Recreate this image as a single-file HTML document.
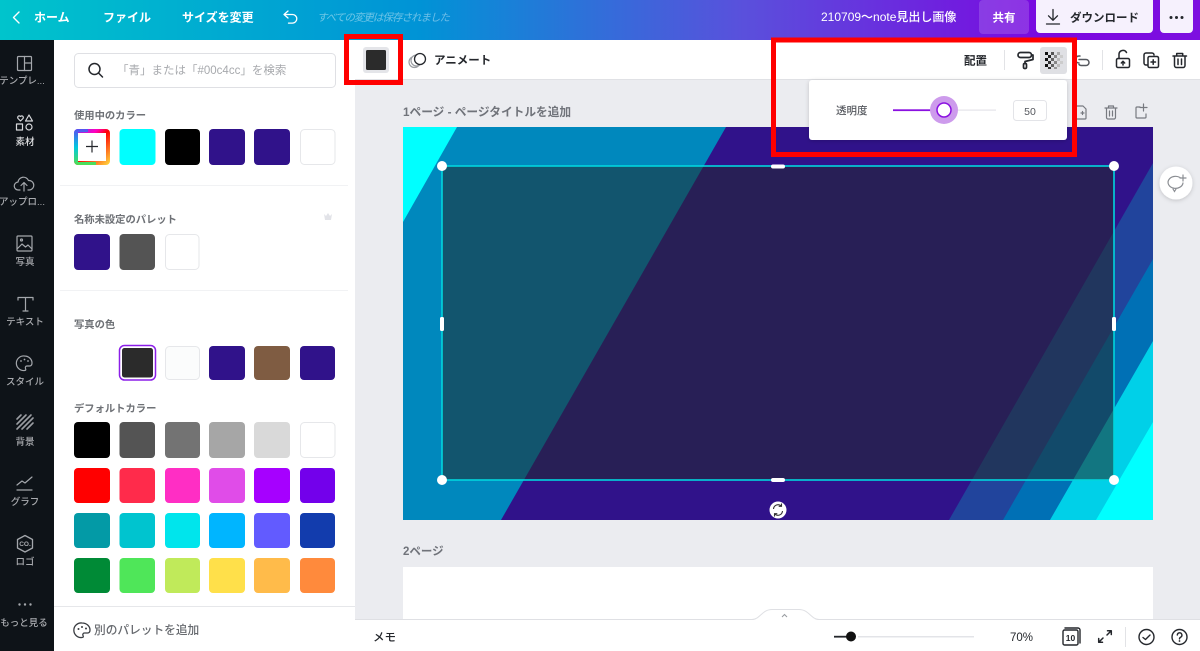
<!DOCTYPE html>
<html lang="ja">
<head>
<meta charset="utf-8">
<title>Canva</title>
<style>
html,body{margin:0;padding:0;width:1200px;height:651px;overflow:hidden;background:#ebecf0}
svg{display:block;position:absolute;left:0;top:0;filter:blur(.35px)}
text{font-family:"Liberation Sans","Noto Sans CJK JP",sans-serif}
.w{fill:#fff;font-size:12px;font-weight:700}
.s{fill:#a9abaf;font-size:9.5px;text-anchor:middle;font-weight:500}
.h{fill:#6e7176;font-size:10.300px;font-weight:700}
.i{fill:none;stroke:#24272c;stroke-width:1.5;stroke-linecap:round;stroke-linejoin:round}
.g{fill:none;stroke:#a4a7ac;stroke-width:1.2;stroke-linecap:round;stroke-linejoin:round}
.p{fill:none;stroke:#777a80;stroke-width:1.2;stroke-linecap:round;stroke-linejoin:round}
.b{fill:#24272c;font-size:11.5px;font-weight:700}
</style>
</head>
<body>
<svg width="1200" height="651" viewBox="0 0 1200 651" xmlns="http://www.w3.org/2000/svg">
<defs>
<linearGradient id="top" x1="0" x2="1" y1="0" y2="0">
<stop offset="0" stop-color="#00c4cc"/>
<stop offset=".35" stop-color="#0093d6"/>
<stop offset=".62" stop-color="#5a50dc"/>
<stop offset=".88" stop-color="#7b06e0"/>
<stop offset="1" stop-color="#7d10e0"/>
</linearGradient>
<linearGradient id="rb" x1="0" y1="0" x2="1" y2="1">
<stop offset="0" stop-color="#6a3df0"/>
<stop offset=".33" stop-color="#ff00c0"/>
<stop offset=".5" stop-color="#ff0000"/>
<stop offset="1" stop-color="#ffe040"/>
</linearGradient>
<linearGradient id="rb2" x1="0" y1="0" x2="0" y2="1">
<stop offset="0" stop-color="#5a50f0"/>
<stop offset=".5" stop-color="#00c8e0"/>
<stop offset="1" stop-color="#50e050"/>
</linearGradient>
<filter id="sh" x="-30%" y="-30%" width="160%" height="160%"><feDropShadow dx="0" dy="1" stdDeviation="2" flood-color="#000" flood-opacity=".18"/></filter>
</defs>

<!-- workspace -->
<rect x="355" y="40" width="845" height="611" fill="#ebecf0"/>

<!-- canvas page 1 -->
<rect x="403" y="127" width="750" height="393" fill="#30128a"/>
<polygon points="403,127 726,127 501,520 403,520" fill="#0088bd"/>
<polygon points="403,127 457,127 403,222" fill="#00ffff"/>
<polygon points="949,520 1153,163 1153,520" fill="#21449c"/>
<polygon points="1003,520 1153,259 1153,520" fill="#0070b5"/>
<polygon points="1050,520 1153,341 1153,520" fill="#00d0e8"/>
<polygon points="1096,520 1153,422 1153,520" fill="#00ffff"/>
<rect x="442" y="166" width="672" height="314" fill="#222b2b" fill-opacity=".54"/>

<!-- selection -->
<rect x="442" y="166" width="672" height="314" fill="none" stroke="#00d5de" stroke-width="1.6"/>
<g fill="#fff">
<circle cx="442" cy="166" r="5"/><circle cx="1114" cy="166" r="5"/><circle cx="442" cy="480" r="5"/><circle cx="1114" cy="480" r="5"/>
<rect x="771" y="164.500" width="14" height="4" rx="2"/><rect x="771" y="478" width="14" height="4" rx="2"/>
<rect x="440" y="317" width="4" height="14" rx="1.500"/><rect x="1112" y="317" width="4" height="14" rx="1.500"/>
<circle cx="778" cy="510" r="8.500"/>
</g>
<path d="M773.500 509a4.600 4.600 0 0 1 7.800-3M782.500 511a4.600 4.600 0 0 1-7.800 3M781.500 503.500v2.800h-2.800M774.500 516.500v-2.800h2.800" fill="none" stroke="#333" stroke-width="1.100"/>

<!-- page 2 -->
<rect x="403" y="567" width="750" height="60" fill="#fff"/>
<text x="403" y="555" fill="#70737a" font-size="11.500" font-weight="700">2ページ</text>
<text x="403" y="116" fill="#70737a" font-size="11.700" font-weight="700">1ページ - ページタイトルを追加</text>

<!-- page icons -->
<g class="p">
<path d="M1076 106h7l3 3v9a1 1 0 0 1-1 1h-8a1 1 0 0 1-1-1z"/>
<path d="M1081 113h3M1082.500 111.500v3"/>
<path d="M1105 108h12M1108.500 108v-2h5v2M1106.500 108v9.500a1.500 1.500 0 0 0 1.500 1.500h6a1.500 1.500 0 0 0 1.500-1.500V108M1109.500 111v5M1112.500 111v5"/>
<path d="M1140 107h-3a1 1 0 0 0-1 1v9a1 1 0 0 0 1 1h8a1 1 0 0 0 1-1v-3M1143.500 104v7M1140 107.500h7"/>
</g>

<!-- comment button -->
<circle cx="1176" cy="183" r="16.500" fill="#fff" filter="url(#sh)"/>
<path d="M1180 177.500a7.500 6 0 1 0 3 5.500M1173 189l1.500 2.500 1.500-2.500M1183 175v6M1180 178h6" fill="none" stroke="#8b8e93" stroke-width="1.200" stroke-linecap="round"/>

<!-- toolbar -->
<rect x="355" y="40" width="845" height="39" fill="#fff"/>
<rect x="355" y="79" width="845" height="1" fill="#e0e1e5"/>
<rect x="363" y="47" width="26" height="26" rx="3" fill="#e4e5e9"/>
<rect x="366" y="50" width="20" height="20" rx="1.500" fill="#2b2b2b"/>
<g fill="#fff" stroke="#9a9da2" stroke-width="1.200"><circle cx="414.500" cy="62" r="5.500"/><circle cx="416.500" cy="60.500" r="5.500"/></g>
<circle cx="420" cy="59" r="5.500" fill="#fff" stroke="#24272c" stroke-width="1.300"/>
<text x="434" y="64" class="b">アニメート</text>
<text x="964" y="64.500" class="b">配置</text>
<rect x="1004" y="50" width="1" height="20" fill="#e2e3e6"/>
<!-- roller -->
<g class="i" style="stroke-width:1.700">
<rect x="1018" y="52.500" width="13.500" height="5" rx="2.500"/>
<path d="M1031.500 55h1.500v4.500l-8 2v2"/>
<rect x="1023.500" y="63.500" width="3" height="5" rx="1.200"/>
</g>
<!-- checker -->
<rect x="1040" y="47" width="27" height="27" rx="3" fill="#dfe0e4"/>
<g>
<rect x="1045" y="52" width="3" height="3" fill="#111"/><rect x="1051" y="52" width="3" height="3" fill="#555"/><rect x="1057" y="52" width="3" height="3" fill="#aaa"/>
<rect x="1048" y="55" width="3" height="3" fill="#222"/><rect x="1054" y="55" width="3" height="3" fill="#888"/><rect x="1060" y="55" width="3" height="3" fill="#ccc"/>
<rect x="1045" y="58" width="3" height="3" fill="#111"/><rect x="1051" y="58" width="3" height="3" fill="#666"/><rect x="1057" y="58" width="3" height="3" fill="#bbb"/>
<rect x="1048" y="61" width="3" height="3" fill="#333"/><rect x="1054" y="61" width="3" height="3" fill="#888"/><rect x="1060" y="61" width="3" height="3" fill="#ccc"/>
<rect x="1045" y="64" width="3" height="3" fill="#111"/><rect x="1051" y="64" width="3" height="3" fill="#666"/><rect x="1057" y="64" width="3" height="3" fill="#bbb"/>
<rect x="1048" y="67" width="3" height="2" fill="#333"/><rect x="1054" y="67" width="3" height="2" fill="#999"/>
</g>
<g class="i">
<!-- link -->
<path d="M1080 56h-1a3.500 3.500 0 0 0 0 7M1079 59.500h7a3 3 0 0 1 0 6h-5a3 3 0 0 1-2-1" style="stroke:#55585e"/>
<!-- lock -->
<rect x="1116.500" y="58.500" width="13" height="9" rx="1.500"/>
<path d="M1119 58.500v-4.500a4 4 0 0 1 7.500-1.500M1123 65v-3.500M1121.300 63l1.700-1.700 1.700 1.700"/>
<!-- dup -->
<path d="M1147.500 65h-1.500a2 2 0 0 1-2-2v-8a2 2 0 0 1 2-2h6a2 2 0 0 1 2 2"/>
<rect x="1148" y="56.500" width="10.500" height="11" rx="1.500"/>
<path d="M1151 62h4.500M1153.200 59.800v4.500"/>
<!-- trash -->
<path d="M1173 56h13.500M1176.700 56v-2.500h6V56M1174.500 56v9.500a2 2 0 0 0 2 2h6.500a2 2 0 0 0 2-2V56M1178 59v5.500M1181.500 59v5.500"/>
</g>
<rect x="1102" y="50" width="1" height="20" fill="#e2e3e6"/>

<!-- popup -->
<rect x="809" y="80" width="258" height="60" rx="3" fill="#fff" filter="url(#sh)"/>
<text x="836" y="114" fill="#55585e" font-size="10.500" font-weight="500">透明度</text>
<rect x="893" y="109.500" width="103" height="1.200" fill="#e4e3ea"/>
<rect x="893" y="109.300" width="50" height="1.800" fill="#8a10e0"/>
<circle cx="944" cy="110" r="14" fill="#cd9bec"/>
<circle cx="944" cy="110" r="7" fill="#fff" stroke="#8a10e0" stroke-width="1.500"/>
<rect x="1013.500" y="100.500" width="33" height="20" rx="3" fill="#fff" stroke="#e3e4e8"/>
<text x="1030" y="115" fill="#55585e" font-size="10.500" text-anchor="middle">50</text>

<!-- bottom bar -->
<rect x="355" y="620" width="845" height="31" fill="#fff"/>
<rect x="355" y="619" width="845" height="1" fill="#dfe0e4"/>
<path d="M752 620c8 0 10-10 20-10h27c10 0 12 10 20 10z" fill="#fff"/>
<path d="M752 619.500c8 0 10-10 20-10h27c10 0 12 10 20 10" fill="none" stroke="#dfe0e4"/>
<path d="M782 617l2.500-2.500 2.500 2.500" fill="none" stroke="#9a9da2" stroke-width="1.100"/>
<text x="373" y="641" fill="#24272c" font-size="11.500" font-weight="500">メモ</text>
<rect x="834" y="635.800" width="14" height="1.800" fill="#24272c"/>
<circle cx="851" cy="636.500" r="5" fill="#111"/>
<rect x="858" y="636" width="116" height="1.500" fill="#e3e4e8"/>
<text x="1010" y="641" fill="#24272c" font-size="11.500" font-weight="500">70%</text>
<g class="i" style="stroke-width:1.400">
<rect x="1063" y="630" width="15" height="15" rx="1.500"/>
<path d="M1065 628h13a2 2 0 0 1 2 2v13"/>
<path d="M1107 635l4-4M1107.500 630.700h3.800v3.800M1103 638l-4 4M1098.700 638.500v3.800h3.800" style="stroke-width:1.500"/>
<circle cx="1146.500" cy="637" r="7.500"/>
<path d="M1143 637.500l2.500 2 4.500-4.500"/>
<circle cx="1179.500" cy="637" r="7.500"/>
<path d="M1177.300 635a2.300 2.300 0 1 1 3.300 2.200c-.8.400-1.100.9-1.100 1.700"/>
</g>
<text x="1070.500" y="641" fill="#24272c" font-size="8.500" font-weight="700" text-anchor="middle">10</text>
<circle cx="1179.500" cy="641" r=".9" fill="#24272c"/>
<rect x="1125" y="627" width="1" height="20" fill="#e2e3e6"/>

<!-- side panel -->
<rect x="54" y="40" width="301" height="611" fill="#fff"/>
<rect x="74.500" y="53.500" width="261" height="34" rx="4" fill="#fff" stroke="#dfe0e4"/>
<g fill="none" stroke="#24272c" stroke-width="1.500" stroke-linecap="round"><circle cx="94.500" cy="69" r="5.500"/><path d="M98.500 73l4 4"/></g>
<text x="117" y="74" fill="#a7a9ad" font-size="11.500">「青」または「#00c4cc」を検索</text>

<text x="74" y="119" class="h">使用中のカラー</text>
<text x="74" y="223" class="h">名称未設定のパレット</text>
<text x="74" y="328" class="h">写真の色</text>
<text x="74" y="412" class="h">デフォルトカラー</text>
<rect x="60" y="185" width="288" height="1" fill="#f1f2f4"/>
<rect x="60" y="290" width="288" height="1" fill="#f1f2f4"/>
<path d="M324 214l2 2 2-3 2 3 2-2-1 6h-6z" fill="#e2e3e8"/>

<!-- row 1 -->
<rect x="74" y="129" width="36" height="36" rx="4" fill="url(#rb)"/>
<path d="M78 129h-0a4 4 0 0 0-4 4v28a4 4 0 0 0 4 4h18l0-3H78V132h10l0-3z" fill="url(#rb2)"/>
<rect x="78" y="133" width="28" height="28" fill="#fff"/>
<path d="M92 140.500v12M86 146.500h12" stroke="#24272c" stroke-width="1.200"/>
<rect x="119.500" y="129" width="36" height="36" rx="4" fill="#00ffff"/>
<rect x="165" y="129" width="35" height="36" rx="4" fill="#000"/>
<rect x="209" y="129" width="36" height="36" rx="4" fill="#30128a"/>
<rect x="254" y="129" width="36" height="36" rx="4" fill="#30128a"/>
<rect x="300.500" y="129.500" width="34.500" height="35" rx="4" fill="#fff" stroke="#e6e7ea"/>
<!-- row 2 -->
<rect x="74" y="234" width="36" height="36" rx="4" fill="#30128a"/>
<rect x="119.500" y="234" width="35.500" height="36" rx="4" fill="#545454"/>
<rect x="165.500" y="234.500" width="33.500" height="35" rx="4" fill="#fff" stroke="#e6e7ea"/>
<!-- photo row -->
<rect x="119.500" y="345.500" width="36" height="34.500" rx="5" fill="#fff" stroke="#8b1ee8" stroke-width="1.500"/>
<rect x="122" y="348" width="31" height="29.500" rx="2.500" fill="#2b2b2b"/>
<rect x="165.500" y="346.500" width="34" height="33" rx="4" fill="#fbfcfc" stroke="#e6e7ea"/>
<rect x="209" y="346" width="36" height="34" rx="4" fill="#30128a"/>
<rect x="254" y="346" width="36" height="34" rx="4" fill="#7f5c42"/>
<rect x="300" y="346" width="35" height="34" rx="4" fill="#30128a"/>
<!-- default rows -->
<g>
<rect x="74" y="422" width="36" height="36" rx="4" fill="#000"/>
<rect x="119.500" y="422" width="35.500" height="36" rx="4" fill="#545454"/>
<rect x="165" y="422" width="35" height="36" rx="4" fill="#737373"/>
<rect x="209" y="422" width="36" height="36" rx="4" fill="#a6a6a6"/>
<rect x="254" y="422" width="36" height="36" rx="4" fill="#d9d9d9"/>
<rect x="300.500" y="422.500" width="34.500" height="35" rx="4" fill="#fff" stroke="#e6e7ea"/>

<rect x="74" y="468" width="36" height="35" rx="4" fill="#ff0000"/>
<rect x="119.500" y="468" width="35.500" height="35" rx="4" fill="#ff2b4b"/>
<rect x="165" y="468" width="35" height="35" rx="4" fill="#ff2ec4"/>
<rect x="209" y="468" width="36" height="35" rx="4" fill="#e04ce8"/>
<rect x="254" y="468" width="36" height="35" rx="4" fill="#a600ff"/>
<rect x="300" y="468" width="35" height="35" rx="4" fill="#7300eb"/>

<rect x="74" y="513" width="36" height="35" rx="4" fill="#039aa6"/>
<rect x="119.500" y="513" width="35.500" height="35" rx="4" fill="#00c4cf"/>
<rect x="165" y="513" width="35" height="35" rx="4" fill="#00e5ec"/>
<rect x="209" y="513" width="36" height="35" rx="4" fill="#00b5ff"/>
<rect x="254" y="513" width="36" height="35" rx="4" fill="#625bff"/>
<rect x="300" y="513" width="35" height="35" rx="4" fill="#123cad"/>

<rect x="74" y="558" width="36" height="35" rx="4" fill="#008a36"/>
<rect x="119.500" y="558" width="35.500" height="35" rx="4" fill="#4fe659"/>
<rect x="165" y="558" width="35" height="35" rx="4" fill="#c0ea5a"/>
<rect x="209" y="558" width="36" height="35" rx="4" fill="#ffe04a"/>
<rect x="254" y="558" width="36" height="35" rx="4" fill="#ffbb4a"/>
<rect x="300" y="558" width="35" height="35" rx="4" fill="#ff8a3c"/>
</g>
<!-- panel footer -->
<rect x="54" y="606" width="301" height="1" fill="#e6e7ea"/>
<g class="i" style="stroke:#3a3d42;stroke-width:1.300">
<path d="M82 623a7.300 7.300 0 1 0 0 14.500c1.500 0 1.500-1 1-2s0-2.500 1.500-2.500h3c1.500 0 2.500-1 2.500-3 0-4-3.500-7-8-7z"/>
</g>
<g fill="#3a3d42"><circle cx="78.500" cy="629" r="1"/><circle cx="82" cy="627" r="1"/><circle cx="86" cy="628.500" r="1"/></g>
<text x="94" y="634" fill="#66696e" font-size="11.700" font-weight="500">別のパレットを追加</text>

<!-- top bar -->
<rect x="0" y="0" width="1200" height="40" fill="url(#top)"/>
<path d="M19 12l-5.500 5.500L19 23" fill="none" stroke="#fff" stroke-width="1.400" stroke-linecap="round" stroke-linejoin="round"/>
<text x="34" y="21.500" class="w">ホーム</text>
<text x="103" y="21.500" class="w">ファイル</text>
<text x="182" y="21.500" class="w">サイズを変更</text>
<path d="M285.500 14.500h7a4.300 4.300 0 0 1 0 8.600h-4M288 11L284 14.500l4 3.500" fill="none" stroke="#fff" stroke-width="1.300" stroke-linecap="round" stroke-linejoin="round"/>
<text x="317" y="21" fill="#ffffff" fill-opacity=".42" font-size="10.500" font-style="italic" textLength="133" lengthAdjust="spacing">すべての変更は保存されました</text>
<text x="821" y="21" fill="#fff" font-size="12" font-weight="500">210709〜note見出し画像</text>
<rect x="979" y="0" width="50" height="34" rx="4" fill="#fff" fill-opacity=".16"/>
<text x="1004" y="21.500" fill="#fff" font-size="11.500" font-weight="700" text-anchor="middle">共有</text>
<rect x="1036" y="-4" width="117" height="37" rx="4" fill="#f6f1fd"/>
<path d="M1053 9.500v10.500M1048.500 15.800l4.500 4.500 4.500-4.500M1046.500 24h13" fill="none" stroke="#24272c" stroke-width="1.300" stroke-linecap="round" stroke-linejoin="round"/>
<text x="1070" y="21.500" fill="#24272c" font-size="11.500" font-weight="700">ダウンロード</text>
<rect x="1160" y="-4" width="33" height="37" rx="4" fill="#f6f1fd"/>
<g fill="#24272c"><circle cx="1171" cy="17.500" r="1.500"/><circle cx="1176.500" cy="17.500" r="1.500"/><circle cx="1182" cy="17.500" r="1.500"/></g>

<!-- sidebar -->
<rect x="0" y="40" width="54" height="611" fill="#0e1318"/>
<g class="g">
<rect x="17.500" y="56.500" width="14" height="14" rx="1"/><path d="M24.500 56.500v14M24.500 63h7"/>
<path d="M20.500 116.500c-1.500-1.500-3.500 0-2.500 2l2.500 2.500 2.500-2.500c1-2-1-3.500-2.500-2zM29 115l3.500 6h-7zM16.500 124h6v6h-6zM29 124a3 3 0 1 1 0 6 3 3 0 0 1 0-6z" style="stroke:#d8d9dc"/>
<path d="M20 190h-1.500a4 4 0 0 1-.5-8 5.500 5.500 0 0 1 10.500-1.500 4.500 4.500 0 0 1 1 9.500H28M24 191v-8M21 185.500l3-3 3 3"/>
<rect x="17" y="236" width="15" height="15" rx="1"/><path d="M17 249l5-5 3.500 3 2.500-2 4 4"/><circle cx="21.500" cy="240" r="1"/>
<path d="M18 300v-2.500h15V300M25.500 297.500V311M23 311h5"/>
<path d="M24.500 356a7.300 7.300 0 1 0 0 14.500c1.500 0 1.500-1 1-2s0-2.500 1.500-2.500h2.500c1.500 0 2.500-1 2.500-3 0-4-3.500-7-7.500-7z"/>
<path d="M21 415l-4 4M26 415l-9 9M31 415l-14 14M33 418l-11 11M33 423l-6 6" style="stroke:#9a9da2;stroke-width:1.600"/>
<path d="M17 485l5-4 3 2 7-6M17 490h15"/>
<path d="M25 535.500l7.500 4v8.500l-7.500 4-7.500-4v-8.500z" style="stroke-width:1.300"/>
</g>
<g fill="#a4a7ac"><circle cx="21" cy="361" r=".9"/><circle cx="24.500" cy="359.500" r=".9"/><circle cx="28" cy="361" r=".9"/></g>
<text x="25" y="546" fill="#a9abaf" font-size="6.500" font-weight="700" text-anchor="middle">CO.</text>
<g fill="#a4a7ac"><circle cx="19.500" cy="604.500" r="1.200"/><circle cx="25" cy="604.500" r="1.200"/><circle cx="30.500" cy="604.500" r="1.200"/></g>
<text x="22" y="84" class="s">テンプレ...</text>
<text x="25" y="145" class="s" style="fill:#e0e1e3">素材</text>
<text x="22" y="205" class="s">アップロ...</text>
<text x="25" y="265" class="s">写真</text>
<text x="25" y="325" class="s">テキスト</text>
<text x="25" y="385" class="s">スタイル</text>
<text x="25" y="445" class="s">背景</text>
<text x="25" y="505" class="s">グラフ</text>
<text x="25" y="565" class="s">ロゴ</text>
<text x="24" y="626" class="s">もっと見る</text>

<!-- red highlight boxes -->
<rect x="346.500" y="36.500" width="54" height="46" fill="none" stroke="#ff0000" stroke-width="5"/>
<rect x="773.500" y="40" width="301" height="114.500" fill="none" stroke="#ff0000" stroke-width="5"/>
</svg>
</body>
</html>
